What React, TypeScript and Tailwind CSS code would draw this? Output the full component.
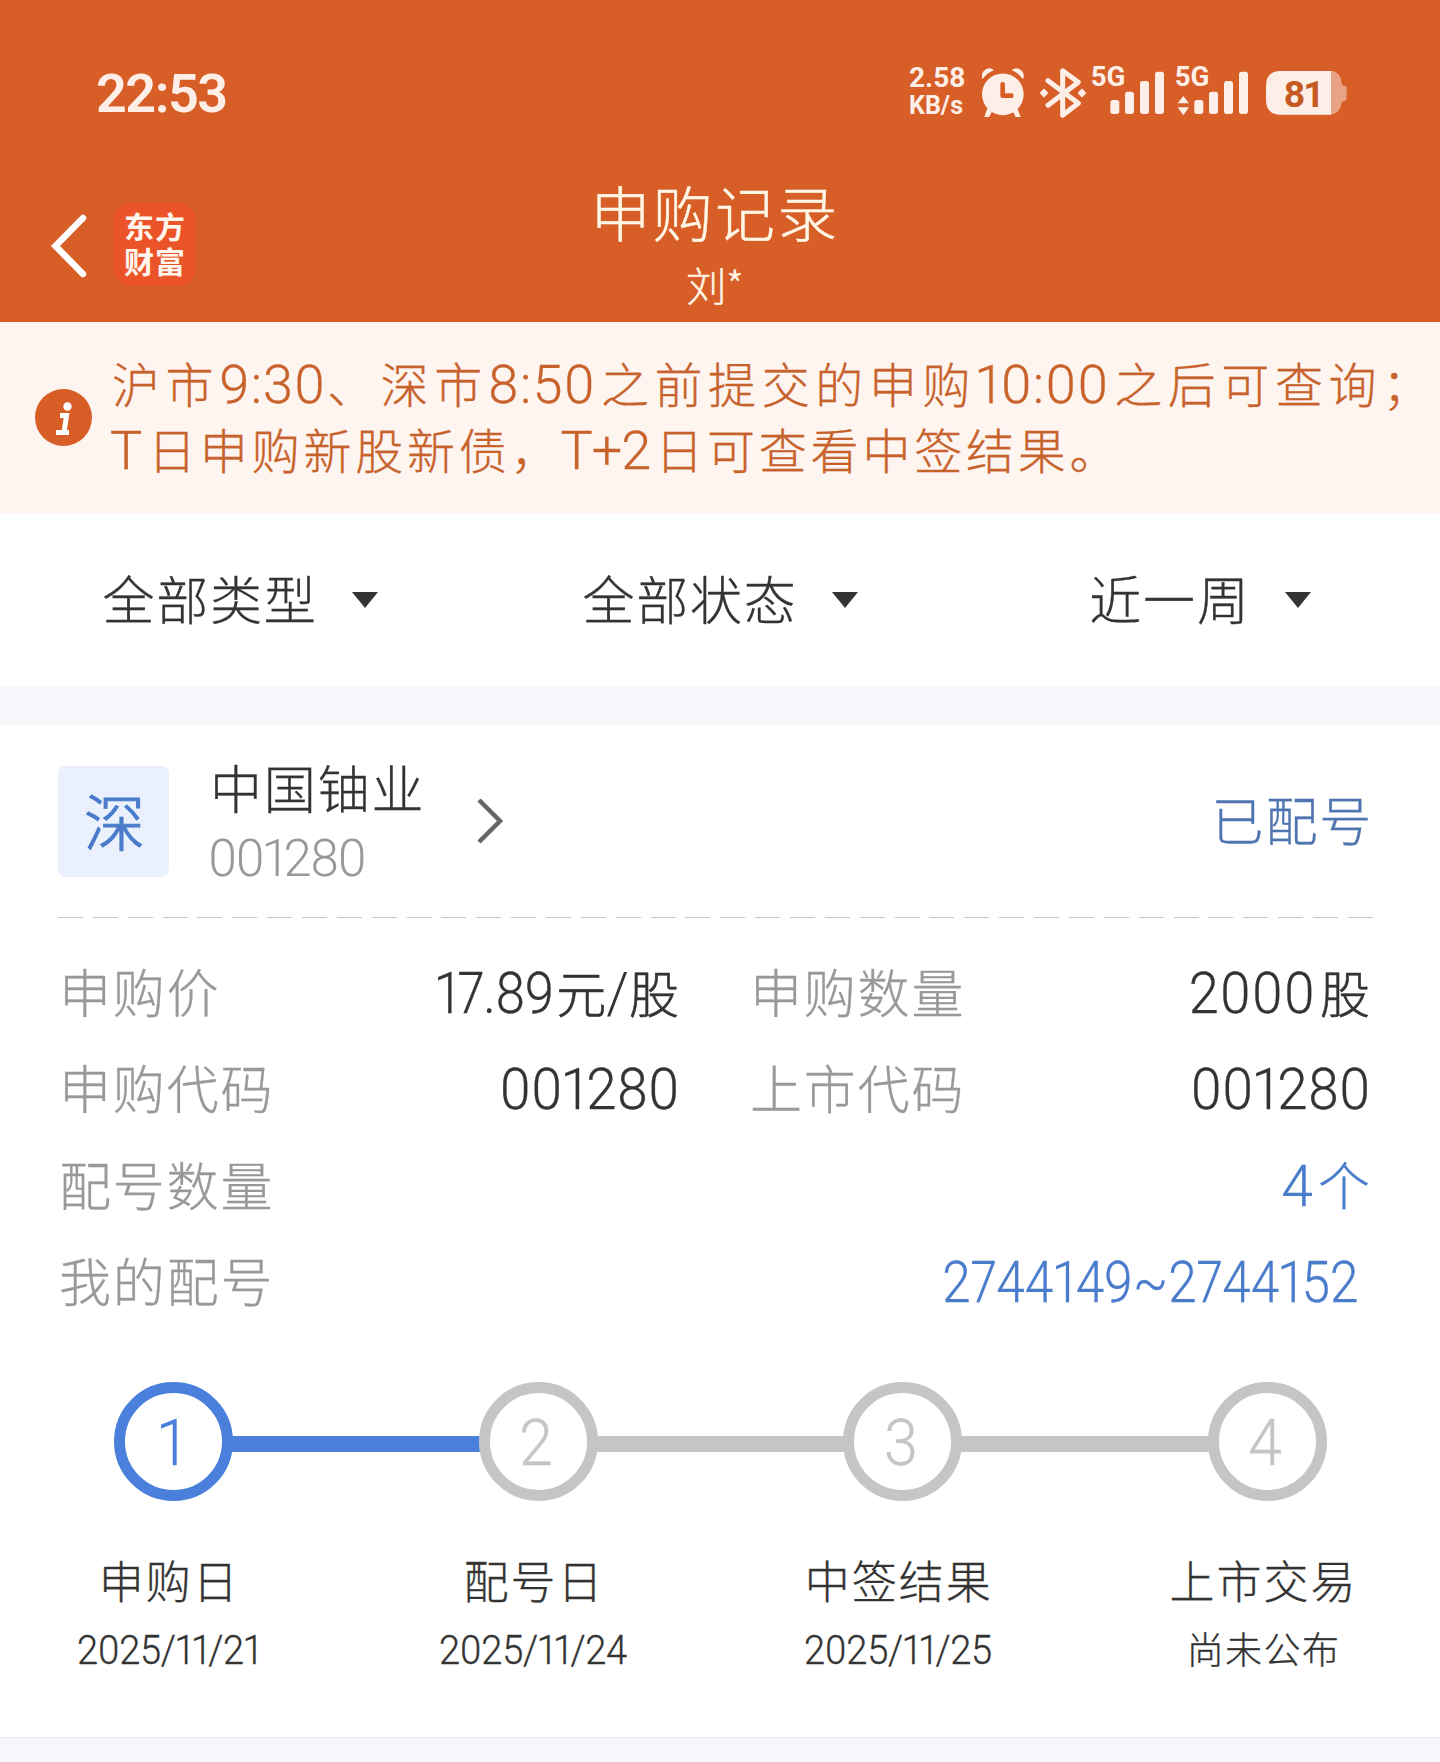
import type { ReactNode } from 'react';

function Num({ children, className = '' }: { children: ReactNode; className?: string }) {
  return (
    <span className={`font-[Roboto,sans-serif] font-light leading-none [font-feature-settings:'pnum'] ${className}`}>
      {children}
    </span>
  );
}

function AlarmIcon() {
  return (
    <svg className="h-[60px] w-[45px]" viewBox="300 69 135 180" fill="#feeee8">
      <path d="M306 113a22 24 0 0 1 36-22q-20 7-33 25Q306 116 306 113Z" />
      <path d="M431 113a22 24 0 0 0-36-22q20 7 33 25Q431 116 431 113Z" />
      <path d="M322 205l-9 26h14l9-16ZM412 205l10 26h-15l-8-16Z" />
      <circle cx="368.500" cy="163" r="62.500" />
      <path d="M368 133V167H394" fill="none" stroke="#d75f27" strokeWidth="14" strokeLinecap="round" strokeLinejoin="round" />
    </svg>
  );
}

function BluetoothIcon() {
  return (
    <svg className="h-[60px] w-[48px]" viewBox="477 69 144 180" fill="none" stroke="#feeee8">
      <path d="M504 122L595 190L548 226V92L595 127L504 196" strokeWidth="15" strokeLinecap="round" strokeLinejoin="round" />
      <path d="M492 149L502 159L492 169L482 159ZM606 149L616 159L606 169L596 159Z" fill="#feeee8" strokeWidth="5" strokeLinejoin="round" />
    </svg>
  );
}

function SignalIcon({ data = false }: { data?: boolean }) {
  return (
    <svg className="-mt-[10px] h-[70px] w-[77px] font-[Roboto,sans-serif]" viewBox="630 39 231 210" fill="#feeee8">
      <text x="632" y="139" fontSize="83" fontWeight="700">5G</text>
      {data && <path d="M658 168L675 190H641ZM658 226L675 202H641Z" />}
      <rect x="691" y="180" width="27" height="42" rx="8" />
      <rect x="735" y="155" width="27" height="67" rx="8" />
      <rect x="780" y="123" width="27" height="99" rx="8" />
      <rect x="825" y="95" width="27" height="127" rx="8" />
    </svg>
  );
}

function BatteryIcon() {
  return (
    <svg className="h-[60px] w-[83px] font-[Roboto,sans-serif]" viewBox="1155 69 249 180">
      <path d="M1353 93q30 2 32 40q3 4 14 6q3 22 0 42q-10 2-14 6q-4 34-32 37Z" fill="#eaa285" />
      <path d="M1200 93H1353V224H1200Q1158 222 1158 180V137Q1158 95 1200 93Z" fill="#feeee8" />
      <text x="1211" y="200" fontSize="112" fontWeight="700" fill="#c45a22" textLength="123">81</text>
    </svg>
  );
}

function Header() {
  return (
    <header className="h-[322px] bg-[#d75f27] text-white">
      <div className="flex h-[123px] items-end justify-between pl-[96px] pr-[92px]">
        <div className="flex h-[60px] items-center font-[Roboto,sans-serif] text-[54px] font-semibold tracking-[-1.500px] text-[#feeee8]">22:53</div>
        <div className="flex h-[60px] items-start text-[#feeee8]">
          <div className="mr-[15px] w-[56px] pt-px font-[Roboto,sans-serif] font-bold">
            <div className="text-[28px] leading-[28px]">2.58</div>
            <div className="text-[25px] leading-[28px]">KB/s</div>
          </div>
          <AlarmIcon />
          <div className="w-[14px]" />
          <BluetoothIcon />
          <div className="w-[3px]" />
          <SignalIcon />
          <div className="w-[7px]" />
          <SignalIcon data />
          <div className="w-[14px]" />
          <BatteryIcon />
        </div>
      </div>
      <div className="grid grid-cols-[1fr_auto_1fr]">
        <div className="flex pl-[48px] pt-[80px]">
          <svg className="mt-[8px] h-[70px] w-[44px]" viewBox="0 0 44 70" fill="none" stroke="#fff" strokeWidth="6.500" strokeLinecap="round" strokeLinejoin="miter">
            <path d="M35 7L7.500 35L35 63" />
          </svg>
          <div className="ml-[21px] h-[83px] w-[83px] rounded-[17px] bg-[#ea5428] pl-[11px] pt-[5px] text-[30px] font-bold leading-[35px] tracking-[1px] text-[#fff6ee]">
            <p className="w-[64px] break-all">东方财富</p>
          </div>
        </div>
        <div className="pr-[10px] pt-[51px] text-center font-light text-[#fff6e6] [-webkit-text-stroke:0.4px]">
          <div className="h-[74px] text-[60px] leading-[74px] tracking-[2.200px]">申购记录</div>
          <div className="h-[72px] text-[40px] leading-[72px]">刘*</div>
        </div>
        <div />
      </div>
    </header>
  );
}

function Notice() {
  return (
    <section className="flex h-[192px] bg-[#fef4f0] pl-[35px] pt-[27px] text-[#c8622b]">
      <svg className="mt-[40px] h-[57px] w-[57px]" viewBox="0 0 57 57">
        <circle cx="28.500" cy="28.500" r="28.500" fill="#d75f27" />
        <circle cx="32.500" cy="17.500" r="4.200" fill="#fff" />
        <path d="M25 26.500H31.500L29 43.500M21 43.500H34" fill="none" stroke="#fff" strokeWidth="5" />
      </svg>
      <div className="ml-[20px] whitespace-nowrap text-[48px] font-light leading-[66px] [-webkit-text-stroke:0.3px]">
        <div className="h-[66px] tracking-[5.600px]">
          沪市<Num className="mr-[1px] text-[54px] tracking-[1px]">9:30</Num>、深市<Num className="mr-[5px] text-[54px] tracking-[1.200px]">8:50</Num>
          之前提交的申购<Num className="mr-[5px] text-[54px] tracking-[1px]">10:00</Num>之后可查询；
        </div>
        <div className="h-[66px] tracking-[3.800px]">
          <Num className="-ml-[2px] mr-[2px] text-[54px]">T</Num>日申购新股新债，<Num className="-ml-[2px] mr-[5px] text-[54px] tracking-[-1px]">T+2</Num>日可查看中签结果。
        </div>
      </div>
    </section>
  );
}

function Filter({ label }: { label: string }) {
  return (
    <div className="flex items-center justify-center">
      <span className="-mt-[4px] text-[52px] leading-[60px] tracking-[1.800px]">{label}</span>
      <svg className="ml-[34px] h-[16px] w-[26px]" viewBox="0 0 26 16">
        <path d="M0 0H26L13 16Z" fill="#333" />
      </svg>
    </div>
  );
}

function Label({ children }: { children: ReactNode }) {
  return <span className="text-[52px] leading-[90px] tracking-[1.800px] text-[#999]">{children}</span>;
}

const steps = [
  { n: '1', label: '申购日', date: '2025/11/21' },
  { n: '2', label: '配号日', date: '2025/11/24' },
  { n: '3', label: '中签结果', date: '2025/11/25' },
  { n: '4', label: '上市交易', date: '尚未公布' },
];

function Steps() {
  return (
    <div className="overflow-hidden">
      <div className="ml-[114px] flex w-[1213px] items-center">
        {steps.map((s, i) => (
          <div key={s.n} className={i ? 'flex flex-1 items-center' : 'flex items-center'}>
            {i > 0 && <div className={`-ml-[4px] -mr-[4px] mt-[5px] h-[16px] flex-1 ${i === 1 ? 'bg-[#4a80dc]' : 'bg-[#c5c5c5]'}`} />}
            <div
              className={`relative flex h-[119px] w-[119px] items-center justify-center rounded-full border-[11px] bg-white ${
                i ? 'border-[#c5c5c5] text-[#c5c5c5]' : 'border-[#4a80dc] text-[#4a80dc]'
              }`}
            >
              <Num className="-ml-[4px] mt-[4px] inline-block scale-x-[0.94] text-[65px]">{s.n}</Num>
            </div>
          </div>
        ))}
      </div>
      <div className="-ml-[13px] mt-[44px] grid w-[1459px] grid-cols-4 text-center">
        {steps.map((s) => (
          <div key={s.n}>
            <div className="h-[68px] text-[45px] leading-[70px] tracking-[2px]">{s.label}</div>
            <div className="h-[70px] text-[37px] leading-[70px] tracking-[1.500px]">
              {s.n === '4' ? s.date : <Num className="-ml-[2px] inline-block scale-x-[0.93] text-[41px] tracking-[-0.400px]">{s.date}</Num>}
            </div>
          </div>
        ))}
      </div>
    </div>
  );
}

export default function App() {
  return (
    <div className="h-[1762px] w-[1440px] overflow-hidden bg-[#f6f7fa] font-['Noto_Sans_CJK_SC',sans-serif] text-[#333]">
      <Header />
      <Notice />
      <section className="grid h-[172px] grid-cols-3 bg-white font-light [-webkit-text-stroke:0.3px]">
        <Filter label="全部类型" />
        <Filter label="全部状态" />
        <Filter label="近一周" />
      </section>
      <section className="mt-[39px] h-[1013px] border-b border-[#e8e8e8] bg-white font-light [-webkit-text-stroke:0.3px]">
        <div className="flex h-[192px] items-center px-[58px]">
          <div className="flex h-[111px] w-[111px] items-center justify-center rounded-[7px] bg-[#eaf1fc] pb-[4px] pl-[2px] text-[61px] leading-none text-[#4a7ccb] [-webkit-text-stroke:1.2px]">深</div>
          <div className="ml-[41px]">
            <div className="h-[71px] text-[52px] leading-[69px] tracking-[1.800px]">中国铀业</div>
            <div className="flex h-[67px] items-center">
              <Num className="-ml-[2px] mt-[4px] text-[51px] tracking-[-1.800px] text-[#999] [-webkit-text-stroke:0px]">001280</Num>
            </div>
          </div>
          <svg className="ml-[52px] h-[46px] w-[28px]" viewBox="0 0 28 46" fill="none" stroke="#666" strokeWidth="4.500">
            <path d="M2 2L23 23L2 44" />
          </svg>
          <div className="-mt-[4px] ml-auto mr-[9px] text-[52px] tracking-[1.800px] text-[#5076b0]">已配号</div>
        </div>
        <div className="mx-[58px] flex w-[1315px] justify-between">
          {Array.from({ length: 38 }, (_, i) => (
            <span key={i} className="h-px w-[25px] bg-[#c6c6c6]" />
          ))}
        </div>
        <div className="grid grid-cols-[620px_620px] gap-x-[71px] pl-[59px] pt-[28px] text-[50px] leading-[90px]">
          <div className="flex h-[96px] justify-between">
            <Label>申购价</Label>
            <span className="[-webkit-text-stroke:0.6px]">
              <Num className="inline-block origin-right scale-x-[0.92] text-[57px] tracking-[-0.600px] [-webkit-text-stroke:0.3px]">17.89</Num>
              <span className="ml-[2px]">元</span>
              <Num className="text-[57px] [-webkit-text-stroke:0px]">/</Num>股
            </span>
          </div>
          <div className="flex h-[96px] justify-between">
            <Label>申购数量</Label>
            <span className="[-webkit-text-stroke:0.6px]">
              <Num className="mr-[4px] inline-block origin-right scale-x-[0.95] text-[57px] tracking-[1px] [-webkit-text-stroke:0.3px]">2000</Num>股
            </span>
          </div>
          <div className="flex h-[97px] justify-between">
            <Label>申购代码</Label>
            <span><Num className="-mr-px inline-block origin-right scale-x-[0.96] text-[57px]">001280</Num></span>
          </div>
          <div className="flex h-[97px] justify-between">
            <Label>上市代码</Label>
            <span><Num className="-mr-px inline-block origin-right scale-x-[0.96] text-[57px]">001280</Num></span>
          </div>
          <div className="col-span-2 flex h-[96px] justify-between">
            <Label>配号数量</Label>
            <span className="text-[52px] text-[#4a7ccb]"><Num className="mr-[5px] text-[57px]">4</Num>个</span>
          </div>
          <div className="col-span-2 flex h-[96px] justify-between">
            <Label>我的配号</Label>
            <span><Num className="mr-[12px] inline-block origin-right scale-x-[0.9] text-[57px] text-[#4a7ccb]">2744149~2744152</Num></span>
          </div>
        </div>
        <div className="pt-[51px]">
          <Steps />
        </div>
      </section>
    </div>
  );
}
